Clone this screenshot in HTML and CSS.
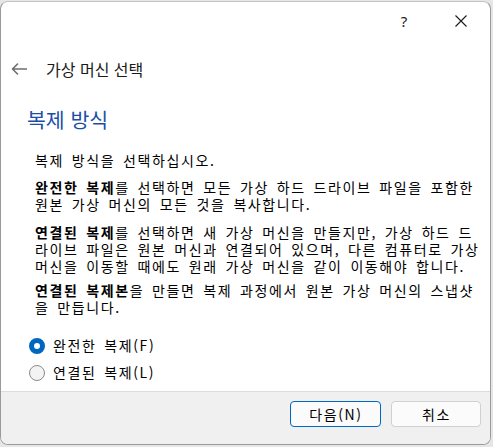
FILE: index.html
```html
<!DOCTYPE html>
<html lang="ko">
<head>
<meta charset="utf-8">
<title>가상 머신 복제</title>
<link rel="stylesheet" href="styles.css">
</head>
<body>
<div class="window">
  <div class="caption">
    <div class="cap-btn help">?</div>
    <div class="cap-btn close">
      <svg width="12" height="12" viewBox="0 0 12 12"><path d="M0.5 0.5 L11.5 11.5 M11.5 0.5 L0.5 11.5" stroke="#1a1a1a" stroke-width="1.1" fill="none"/></svg>
    </div>
  </div>
  <div class="nav">
    <svg class="back" width="16" height="12" viewBox="0 0 16 12"><path d="M15.5 6 H1.5 M6.5 1 L1.5 6 L6.5 11" stroke="#6e6e6e" stroke-width="1.6" fill="none" stroke-linecap="round" stroke-linejoin="round"/></svg>
    <span class="nav-title">가상 머신 선택</span>
  </div>
  <div class="content">
    <h1 class="heading">복제 방식</h1>
    <p class="para p1">복제 방식을 선택하십시오.</p>
    <p class="para p2"><b>완전한 복제</b>를 선택하면 모든 가상 하드 드라이브 파일을 포함한<br>원본 가상 머신의 모든 것을 복사합니다.</p>
    <p class="para p3"><b>연결된 복제</b>를 선택하면 새 가상 머신을 만들지만, 가상 하드 드<br>라이브 파일은 원본 머신과 연결되어 있으며, 다른 컴퓨터로 가상<br>머신을 이동할 때에도 원래 가상 머신을 같이 이동해야 합니다.</p>
    <p class="para p4"><b>연결된 복제본</b>을 만들면 복제 과정에서 원본 가상 머신의 스냅샷<br>을 만듭니다.</p>
    <div class="radios">
      <label class="radio"><span class="dot checked"></span><span class="rlabel">완전한 복제(F)</span></label>
      <label class="radio"><span class="dot"></span><span class="rlabel">연결된 복제(L)</span></label>
    </div>
  </div>
  <div class="footer">
    <button class="btn default">다음(N)</button>
    <button class="btn">취소</button>
  </div>
</div>
</body>
</html>
```

FILE: styles.css
```css
html, body {
  margin: 0;
  padding: 0;
}
body {
  background: #e6e6e6;
  width: 493px;
  height: 447px;
  overflow: hidden;
  font-family: "Noto Sans CJK KR", "Noto Sans", sans-serif;
  color: #000;
}
.window {
  box-sizing: border-box;
  margin-top: 1px;
  width: 491px;
  height: 444px;
  background: #fff;
  border: 1px solid #9a9a9a;
  border-top-color: #c4c4c4;
  border-radius: 8px;
  display: flex;
  flex-direction: column;
  overflow: hidden;
}
.caption {
  height: 38px;
  display: flex;
  justify-content: flex-end;
  flex-shrink: 0;
}
.cap-btn {
  height: 38px;
  display: flex;
  align-items: center;
  justify-content: center;
  box-sizing: border-box;
}
.help {
  font-family: "Noto Sans", sans-serif;
  font-size: 15px;
  color: #1a1a1a;
  width: 58px;
  padding-left: 2px;
}
.close {
  width: 58px;
  padding-right: 1px;
}
.nav {
  margin-top: 12px;
  height: 33px;
  display: flex;
  align-items: center;
  padding-left: 10px;
  flex-shrink: 0;
}
.back {
  margin-right: 19px;
}
.nav-title {
  font-size: 16px;
  line-height: 20px;
  color: #1a1a1a;
}
.content {
  flex: 1;
  padding-left: 26px;
}
.heading {
  margin: 22px 0 0 0;
  font-size: 20.5px;
  line-height: 24px;
  font-weight: normal;
  color: #1b4fa6;
}
.para {
  margin: 0;
  padding-left: 8px;
  font-size: 14px;
  line-height: 17px;
  letter-spacing: 1.6px;
  word-spacing: 2.3px;
  white-space: nowrap;
}
.para b {
  display: inline-block;
  line-height: 17px;
  font-weight: bold;
}
.p1 { margin-top: 21px; }
.p2 { margin-top: 10px; }
.p3 { margin-top: 11px; }
.p4 { margin-top: 7px; }
.radios {
  margin-top: 20px;
  display: flex;
  flex-direction: column;
  gap: 8px;
  padding-left: 2px;
}
.radio {
  display: flex;
  align-items: center;
  height: 19px;
}
.dot {
  box-sizing: border-box;
  width: 16px;
  height: 16px;
  border-radius: 50%;
  border: 1px solid #8a8a8a;
  background: #f3f3f3;
  margin-right: 8px;
}
.dot.checked {
  border: 5px solid #0067c0;
  background: #fff;
}
.rlabel {
  font-size: 14px;
  letter-spacing: 1.6px;
  word-spacing: 2.3px;
  line-height: 19px;
  color: #000;
}
.footer {
  flex-shrink: 0;
  height: 43px;
  background: #f0f0f0;
  border-top: 1px solid #dcdcdc;
  display: flex;
  justify-content: flex-end;
  align-items: flex-start;
  padding-top: 9px;
  padding-right: 9px;
  gap: 10px;
}
.btn {
  box-sizing: border-box;
  width: 90px;
  height: 26px;
  background: #fbfbfb;
  border: 1px solid #d0d0d0;
  border-radius: 4px;
  font-family: "Noto Sans CJK KR", "Noto Sans", sans-serif;
  font-size: 14px;
  line-height: 24px;
  letter-spacing: 1.6px;
  color: #000;
  padding: 0 0 0 1px;
}
.btn.default {
  width: 91px;
  border-color: #0067c0;
}
```
